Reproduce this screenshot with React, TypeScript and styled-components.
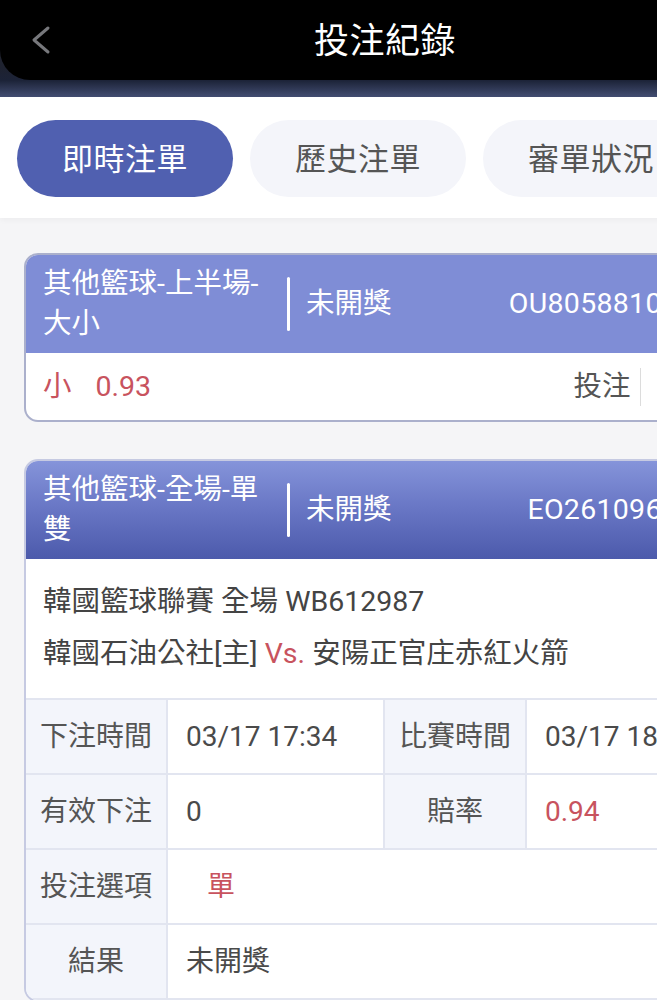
import React from "react";
import styled, {createGlobalStyle, css} from "styled-components";

const GlobalStyle = createGlobalStyle`
    html, body {
        margin: 0;
        padding: 0;
        background: #f5f5f7;
        overflow-x: hidden;
    }

    body {
        font-family: Roboto, "Noto Sans CJK TC", "Noto Sans", sans-serif;
        color: #4a4a4a;
    }
`;

const RED = '#c8535e';

const Page = styled.div`
    width: 770px;
    min-height: 1000px;
`;

const TopArea = styled.div`
    height: 97px;
    background: linear-gradient(to bottom, #2a2d31 0%, #1e2230 70%, #1c2338 83%, #434e72 100%);
`;

const NavBar = styled.header`
    height: 80px;
    box-sizing: border-box;
    padding: 0 28px 5px;
    background: #000;
    border-radius: 0 0 30px 30px;
    display: grid;
    grid-template-columns: 1fr auto 1fr;
    align-items: center;
`;

const BackButton = styled.button`
    justify-self: start;
    display: flex;
    align-items: center;
    margin-top: 4px;
    background: none;
    border: none;
    padding: 0;
    cursor: pointer;
`;

const Title = styled.h1`
    margin: 0;
    font-size: 35px;
    font-weight: 400;
    color: #fff;
    letter-spacing: 0.5px;
`;

const TabBar = styled.nav`
    display: flex;
    gap: 17px;
    padding: 23px 17px 21px;
    background: #fff;
    box-shadow: 0 2px 6px rgba(0, 0, 0, 0.04);
`;

const Tab = styled.button<{ active?: boolean }>`
    flex-shrink: 0;
    width: 216px;
    height: 77px;
    padding: 0 0 5px;
    border: none;
    border-radius: 39px;
    font-family: inherit;
    font-size: 31px;
    letter-spacing: 0.5px;
    cursor: pointer;
    ${props => props.active ? css`
        background: #5060b0;
        color: #fff;
    ` : css`
        background: #f4f5fa;
        color: #555;
    `}
`;

const Content = styled.main`
    display: flex;
    flex-direction: column;
    gap: 37px;
    padding: 35px 24px;
`;

const Card = styled.section<{ borderColor: string }>`
    background: #fff;
    border: 2px solid ${props => props.borderColor};
    border-radius: 14px;
    overflow: hidden;
`;

const CardHeader = styled.div<{ gradient?: boolean }>`
    display: flex;
    align-items: center;
    padding: 9px 17px;
    color: #fff;
    font-size: 28.5px;
    line-height: 40px;
    background: ${props => props.gradient
            ? 'linear-gradient(to bottom, #8594da 0%, #6a78c6 45%, #4c5aab 100%)'
            : '#7f8dd6'};
`;

const GameTitle = styled.div`
    flex-shrink: 0;
    width: 228px;
`;

const HeaderDivider = styled.span`
    flex-shrink: 0;
    width: 3px;
    height: 54px;
    margin: 0 16px 0 16px;
    border-radius: 2px;
    background: #fff;
`;

const Status = styled.div`
    flex: 1;
`;

const OrderId = styled.div`
    white-space: nowrap;
    letter-spacing: 0.3px;
`;

const SummaryRow = styled.div`
    display: flex;
    align-items: center;
    justify-content: space-between;
    height: 67px;
    padding: 0 17px;
    font-size: 28.5px;
    line-height: 40px;
`;

const Pick = styled.div`
    display: flex;
    align-items: center;
    gap: 24px;
    color: ${RED};
`;

const Stake = styled.div`
    display: flex;
    align-items: center;
    color: #555;
`;

const StakeDivider = styled.span`
    width: 1px;
    height: 38px;
    margin: 0 14px 0 10px;
    background: #dcdcdc;
`;

const MatchInfo = styled.div`
    padding: 17px 17px 18px;
    font-size: 28.5px;
    line-height: 52px;
    color: #444;
`;

const Red = styled.span`
    color: ${RED};
`;

const DetailGrid = styled.div`
    display: grid;
    grid-template-columns: 142px 217px 142px 1fr;
    border-top: 2px solid #e2e5f0;
`;

const Cell = styled.div<{ label?: boolean; span?: number; indent?: boolean }>`
    display: flex;
    align-items: center;
    height: 73px;
    border-bottom: 2px solid #e2e5f0;
    border-right: 2px solid #e2e5f0;
    font-size: 28px;
    line-height: 40px;
    white-space: nowrap;
    grid-column: ${props => props.span ? `span ${props.span}` : 'auto'};
    ${props => props.label ? css`
        justify-content: center;
        background: #f3f5fb;
        color: #555;
    ` : css`
        padding-left: ${props.indent ? '39px' : '18px'};
        background: #fff;
        color: #4a4a4a;
    `}
`;

const ChevronLeft = () =>
    <svg width="26" height="30" viewBox="0 0 26 30" fill="none">
        <polyline points="20,3 6,15 20,27" stroke="#77787c" strokeWidth="3" strokeLinecap="round"
                  strokeLinejoin="round"/>
    </svg>;

const tabs = ['即時注單', '歷史注單', '審單狀況'];

export default function App() {
    return <Page>
        <GlobalStyle/>
        <TopArea>
            <NavBar>
                <BackButton aria-label="back"><ChevronLeft/></BackButton>
                <Title>投注紀錄</Title>
                <span/>
            </NavBar>
        </TopArea>

        <TabBar>
            {tabs.map((tab, idx) => <Tab key={tab} active={idx === 0}>{tab}</Tab>)}
        </TabBar>

        <Content>
            <Card borderColor="#abb0cc">
                <CardHeader>
                    <GameTitle>其他籃球-上半場-大小</GameTitle>
                    <HeaderDivider/>
                    <Status>未開獎</Status>
                    <OrderId>OU80588102345</OrderId>
                </CardHeader>
                <SummaryRow>
                    <Pick><span>小</span><span>0.93</span></Pick>
                    <Stake>
                        <span>投注</span>
                        <StakeDivider/>
                        <span>10.00</span>
                    </Stake>
                </SummaryRow>
            </Card>

            <Card borderColor="#c6cae2">
                <CardHeader gradient>
                    <GameTitle>其他籃球-全場-單雙</GameTitle>
                    <HeaderDivider/>
                    <Status>未開獎</Status>
                    <OrderId>EO2610962345</OrderId>
                </CardHeader>
                <MatchInfo>
                    <div>韓國籃球聯賽 全場 WB612987</div>
                    <div>韓國石油公社[主] <Red>Vs.</Red> 安陽正官庄赤紅火箭</div>
                </MatchInfo>
                <DetailGrid>
                    <Cell label>下注時間</Cell>
                    <Cell>03/17 17:34</Cell>
                    <Cell label>比賽時間</Cell>
                    <Cell>03/17 18:00</Cell>

                    <Cell label>有效下注</Cell>
                    <Cell>0</Cell>
                    <Cell label>賠率</Cell>
                    <Cell><Red>0.94</Red></Cell>

                    <Cell label>投注選項</Cell>
                    <Cell span={3} indent><Red>單</Red></Cell>

                    <Cell label>結果</Cell>
                    <Cell span={3}>未開獎</Cell>
                </DetailGrid>
            </Card>
        </Content>
    </Page>;
}
